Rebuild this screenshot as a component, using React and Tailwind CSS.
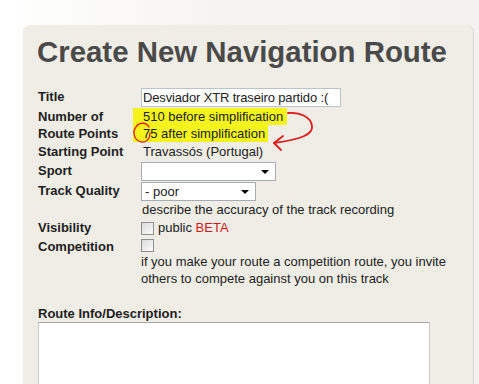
import React from 'react';

const Label = ({ children, className = '' }) => (
  <div className={`w-[103px] shrink-0 font-bold text-[#1e1e1e] ${className}`}>{children}</div>
);

const FakeSelect = ({ width, value }) => (
  <div className={`relative h-[19px] ${width} border border-[#a5acb5] bg-white pl-[3px] leading-[17px] text-[#222]`}>
    {value}
    <span className="absolute right-[6px] top-[7px] h-0 w-0 border-x-[4px] border-t-[4px] border-x-transparent border-t-black" />
  </div>
);

const Checkbox = () => (
  <span className="inline-block h-[13px] w-[13px] shrink-0 border border-[#8f8f8f] bg-gradient-to-br from-[#dcdcdc] to-[#fbfbfb]" />
);

export default function App() {
  return (
    <div
      className="h-[384px] w-[479px] overflow-hidden bg-gradient-to-r from-white via-[#f4f3ef] to-[#f3f2ee] pl-[23px] pr-[5px] pt-[25px] text-[13px] text-[#222]"
      style={{ fontFamily: '"Liberation Sans", Arial, sans-serif' }}
    >
      <div className="relative h-[400px] rounded-t-[7px] border-r border-[#d9d7cf] bg-[#efede6] pl-[15px] pt-[10px]">
        <h1 className="-ml-[1px] text-[29.4px] font-bold leading-[34px] text-[#4a4a4a]">
          Create New Navigation Route
        </h1>

        <div className="mt-[18px] leading-[18px]">
          <div className="flex h-[20px] items-center">
            <Label>Title</Label>
            <div className="h-[19px] w-[200px] overflow-hidden whitespace-nowrap border border-[#b9c3cc] bg-white pl-[1px] leading-[17px] tracking-[-0.15px] text-[#222]">
              Desviador XTR traseiro partido :(
            </div>
          </div>

          <div className="flex pt-[1px]">
            <Label className="leading-[17px]">
              Number of
              <br />
              Route Points
            </Label>
            <div className="leading-[17px]">
              <div>
                <span className="-ml-[8px] inline-block bg-[#f4f41c] pl-[10px] pr-[4px]">510 before simplification</span>
              </div>
              <div>
                <span className="-ml-[8px] inline-block bg-[#f4f41c] pl-[10px] pr-[3px]">75 after simplification</span>
              </div>
            </div>
          </div>

          <div className="flex h-[19px] items-center">
            <Label>Starting Point</Label>
            <div className="pl-[2px]">Travassós (Portugal)</div>
          </div>

          <div className="flex h-[20px] items-center">
            <Label>Sport</Label>
            <FakeSelect width="w-[135px]" value="" />
          </div>

          <div className="flex h-[20px] items-center">
            <Label>Track Quality</Label>
            <FakeSelect width="w-[115px]" value="- poor" />
          </div>

          <div className="flex h-[18px] items-center">
            <Label />
            <div className="pl-[1px]">describe the accuracy of the track recording</div>
          </div>

          <div className="flex h-[18px] items-center">
            <Label>Visibility</Label>
            <div className="flex items-center gap-[4px]">
              <Checkbox />
              <span>
                public <span className="text-[#d41818]">BETA</span>
              </span>
            </div>
          </div>

          <div className="flex">
            <Label className="pt-[1px]">Competition</Label>
            <div className="pt-[2px]">
              <Checkbox />
              <div className="-mt-[4px] leading-[17px]">
                if you make your route a competition route, you invite
                <br />
                others to compete against you on this track
              </div>
            </div>
          </div>
        </div>

        <div className="mt-[19px] font-bold leading-[16px] text-[#1e1e1e]">Route Info/Description:</div>
        <div className="h-[80px] w-[392px] border border-[#c9c9c9] border-t-[#a8a8a8] bg-white" />

        {/* hand drawn marks */}
        <svg className="pointer-events-none absolute left-[-23px] top-[-25px]" width="479" height="384">
          <path
            d="M149 127 C146 122 139 122 136 127 C132 132 134 140 141 142 C146 143 150 139 150 133"
            fill="none"
            stroke="#e01c1c"
            strokeWidth="1.3"
            strokeLinecap="round"
          />
          <path
            d="M288 113 C300 112 311 117 312 126 C313 134 303 139 274 143"
            fill="none"
            stroke="#e01c1c"
            strokeWidth="1.8"
            strokeLinecap="round"
          />
          <path
            d="M283 136 L274 143 L281 150"
            fill="none"
            stroke="#e01c1c"
            strokeWidth="1.8"
            strokeLinecap="round"
            strokeLinejoin="round"
          />
        </svg>
      </div>
    </div>
  );
}
